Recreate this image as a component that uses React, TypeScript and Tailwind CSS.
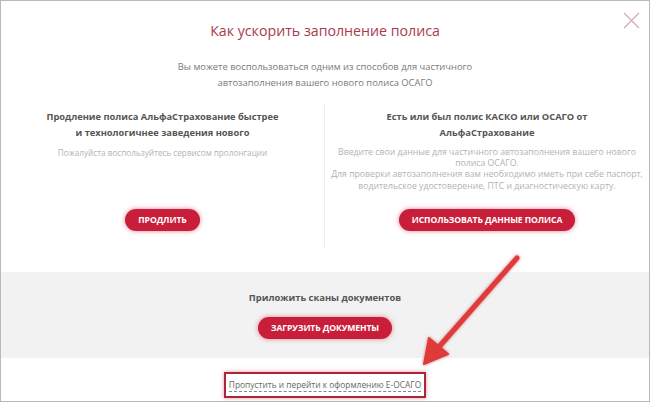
import React from "react"

const font = { fontFamily: '"Open Sans", "Noto Sans", Arial, sans-serif' }

function PillButton({ children, className = "" }: { children: React.ReactNode; className?: string }) {
  return (
    <button
      className={`h-[22px] rounded-full bg-[#c81e3a] px-[13px] text-[8.6px] font-bold uppercase leading-none tracking-[-0.1px] text-white shadow-[0_0_5px_rgba(210,30,60,0.55)] ${className}`}
    >
      {children}
    </button>
  )
}

function Arrow() {
  return (
    <svg
      className="pointer-events-none absolute left-0 top-0"
      width="650"
      height="402"
      viewBox="0 0 650 402"
    >
      <defs>
        <filter id="glow" x="-20%" y="-20%" width="140%" height="140%">
          <feDropShadow dx="0" dy="0" stdDeviation="1.6" floodColor="#b0202a" floodOpacity="0.6" />
        </filter>
      </defs>
      <g filter="url(#glow)">
        <line x1="516" y1="257" x2="437" y2="347" stroke="#e03a3a" strokeWidth="5" strokeLinecap="round" />
        <polygon points="423,363 428,337 447,353" fill="#e03a3a" strokeLinejoin="round" stroke="#e03a3a" strokeWidth="2" />
      </g>
    </svg>
  )
}

export default function App() {
  return (
    <div
      className="relative flex h-[402px] w-[650px] flex-col overflow-hidden border border-[#b9b9b9] bg-white"
      style={font}
    >
      {/* close */}
      <svg className="absolute right-[9px] top-[11px]" width="17" height="17" viewBox="0 0 17 17">
        <path d="M1 1L16 16M16 1L1 16" stroke="#d6a8b0" strokeWidth="1.2" />
      </svg>

      <h1 className="mt-[19px] text-center text-[14.2px] font-normal leading-[22px] text-[#a83a4d]">
        Как ускорить заполнение полиса
      </h1>
      <p className="mt-[17px] text-center text-[9.4px] leading-[16px] text-[#7a7a7a]">
        Вы можете воспользоваться одним из способов для частичного
        <br />
        автозаполнения вашего нового полиса ОСАГО
      </p>

      <div className="mt-[14px] grid h-[142px] grid-cols-2">
        <div className="flex flex-col items-center border-r border-[#ededed] pt-[4px] text-center">
          <h2 className="text-[9.3px] font-bold leading-[16px] text-[#555]">
            Продление полиса АльфаСтрахование быстрее
            <br />
            и технологичнее заведения нового
          </h2>
          <p className="mt-[6px] text-[8.2px] leading-[11px] text-[#b3b3b3]">
            Пожалуйста воспользуйтесь сервисом пролонгации
          </p>
          <PillButton className="mb-[16px] mt-auto">Продлить</PillButton>
        </div>
        <div className="flex flex-col items-center pt-[4px] text-center">
          <h2 className="text-[9.3px] font-bold leading-[16px] text-[#555]">
            Есть или был полис КАСКО или ОСАГО от
            <br />
            АльфаСтрахование
          </h2>
          <p className="mt-[6px] text-[8.7px] leading-[11.2px] text-[#b3b3b3]">
            Введите свои данные для частичного автозаполнения вашего нового
            <br />
            полиса ОСАГО.
            <br />
            Для проверки автозаполнения вам необходимо иметь при себе паспорт,
            <br />
            водительское удостоверение, ПТС и диагностическую карту.
          </p>
          <PillButton className="mb-[16px] mt-auto">Использовать данные полиса</PillButton>
        </div>
      </div>

      <div className="mt-[25px] flex h-[86px] flex-col items-center bg-[#f2f2f2] pt-[18px]">
        <h2 className="text-[9.4px] font-bold leading-[16px] text-[#555]">Приложить сканы документов</h2>
        <PillButton className="mt-[11px]">Загрузить документы</PillButton>
      </div>

      <div className="mt-[14px] flex justify-center">
        <div className="flex h-[26px] w-[202px] items-center justify-center border-2 border-[#a8283a] shadow-[0_0_4px_rgba(200,40,60,0.5)]">
          <span className="whitespace-nowrap border-b border-dashed border-[#888] text-[8.4px] leading-[12px] text-[#666]">
            Пропустить и перейти к оформлению Е-ОСАГО
          </span>
        </div>
      </div>

      <Arrow />
    </div>
  )
}
